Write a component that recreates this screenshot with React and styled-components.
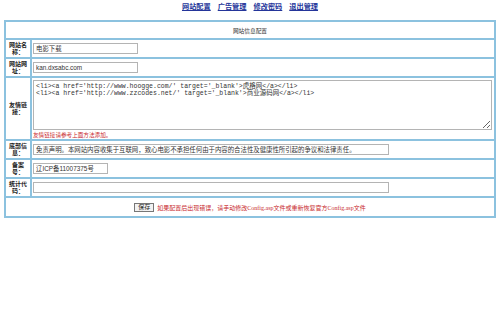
import React from "react";
import styled, { createGlobalStyle } from "styled-components";

const Global = createGlobalStyle`
  html, body { margin: 0; padding: 0; background: #fff; }
  body { font-family: "Liberation Serif", "Noto Sans CJK SC", serif; }
`;

const BLUE = "#8cc2df";
const RED = "#c8282d";
const CJK = `"Liberation Sans", "Noto Sans CJK SC", sans-serif`;

const Page = styled.div`
  width: 500px;
  height: 316px;
  padding-top: 2px;
  box-sizing: border-box;
`;

const Nav = styled.nav`
  display: flex;
  justify-content: center;
  align-items: center;
  gap: 7px;
  height: 10px;
  margin-bottom: 8px;
  padding-left: 0px;
`;

const NavLink = styled.a`
  font-family: ${CJK};
  font-size: 7.2px;
  font-weight: bold;
  color: #24359a;
  text-decoration: underline;
  line-height: 10px;
`;

const Frame = styled.div`
  width: 492px;
  margin: 0 auto;
  box-sizing: border-box;
  padding: 2px;
  background: ${BLUE};
  display: grid;
  grid-template-columns: 24px 1fr;
  gap: 2px;
`;

const Title = styled.div`
  grid-column: 1 / span 2;
  background: #fff;
  height: 16px;
  display: flex;
  align-items: center;
  justify-content: center;
  font-family: ${CJK};
  font-size: 5.7px;
  color: #333;
`;

const Label = styled.div`
  background: #fff;
  height: ${(p) => p.$h}px;
  display: flex;
  align-items: center;
  justify-content: center;
  text-align: center;
  padding: 0 3px;
  font-family: ${CJK};
  font-size: 6px;
  line-height: 6.6px;
  font-weight: bold;
  color: #222;
  word-break: break-all;
`;

const Cell = styled.div`
  background: #fff;
  height: ${(p) => p.$h}px;
  display: flex;
  flex-direction: column;
  justify-content: center;
  align-items: flex-start;
  padding-left: 1px;
  box-sizing: border-box;
`;

const Input = styled.input`
  width: ${(p) => p.$w}px;
  height: 11px;
  box-sizing: border-box;
  border: 1px solid #b4b4b4;
  padding: 0 2px;
  margin: 0;
  font-family: ${CJK};
  font-size: 6.4px;
  color: #333;
  background: #fff;
  outline: none;
`;

const Area = styled.textarea`
  width: 459px;
  height: 50px;
  box-sizing: border-box;
  border: 1px solid #b4b4b4;
  padding: 3px 2px;
  margin: 2px 0 0 0;
  font-family: "Liberation Mono", "Noto Sans CJK SC", monospace;
  font-size: 6.5px;
  line-height: 6.7px;
  color: #333;
  resize: both;
  outline: none;
`;

const Note = styled.div`
  font-family: ${CJK};
  font-size: 5.6px;
  line-height: 8px;
  color: ${RED};
  margin-top: 1px;
`;

const SaveRow = styled.div`
  grid-column: 1 / span 2;
  background: #fff;
  height: 18px;
  display: flex;
  align-items: center;
  justify-content: center;
  gap: 3px;
`;

const Button = styled.button`
  width: 20px;
  height: 9px;
  padding: 0;
  margin: 0;
  box-sizing: border-box;
  border: 1px solid #777;
  background: #f2f2f2;
  font-family: ${CJK};
  font-size: 6px;
  line-height: 7px;
  color: #222;
`;

const Hint = styled.span`
  font-family: "Liberation Serif", "Noto Sans CJK SC", serif;
  font-size: 6px;
  color: ${RED};
`;

export default function App() {
  return (
    <Page>
      <Global />
      <Nav>
        <NavLink href="#">网站配置</NavLink>
        <NavLink href="#">广告管理</NavLink>
        <NavLink href="#">修改密码</NavLink>
        <NavLink href="#">退出管理</NavLink>
      </Nav>
      <Frame>
        <Title>网站信息配置</Title>

        <Label $h={17}>网站名称：</Label>
        <Cell $h={17}>
          <Input $w={105} defaultValue="电影下载" />
        </Cell>

        <Label $h={17}>网站网址：</Label>
        <Cell $h={17}>
          <Input $w={105} defaultValue="kan.dxsabc.com" />
        </Cell>

        <Label $h={61}>友情链接：</Label>
        <Cell $h={61}>
          <Area
            defaultValue={
              "<li><a href='http://www.hoogge.com/' target='_blank'>虎格网</a></li>\n<li><a href='http://www.zzcodes.net/' target='_blank'>商业源码网</a></li>"
            }
          />
          <Note>友情链接请参考上面方法添加。</Note>
        </Cell>

        <Label $h={17}>底部信息：</Label>
        <Cell $h={17}>
          <Input
            $w={356}
            defaultValue="免责声明。本网站内容收集于互联网，致心电影不承担任何由于内容的合法性及健康性所引起的争议和法律责任。"
          />
        </Cell>

        <Label $h={17}>备案号：</Label>
        <Cell $h={17}>
          <Input $w={75} defaultValue="辽ICP备11007375号" />
        </Cell>

        <Label $h={17}>统计代码：</Label>
        <Cell $h={17}>
          <Input $w={356} defaultValue="" />
        </Cell>

        <SaveRow>
          <Button type="button">保存</Button>
          <Hint>如果配置后出现错误，请手动修改Config.asp文件或重新恢复官方Config.asp文件</Hint>
        </SaveRow>
      </Frame>
    </Page>
  );
}
